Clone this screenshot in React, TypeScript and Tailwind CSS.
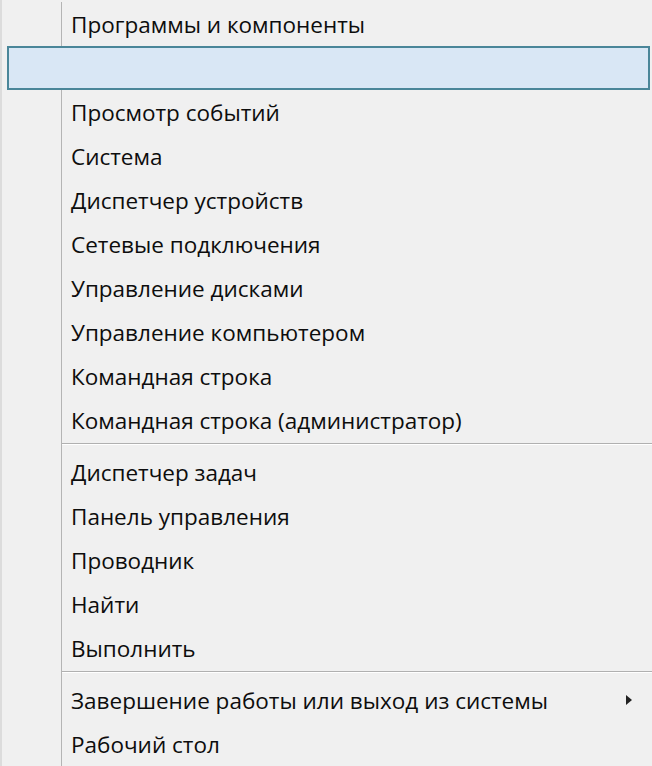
const groups: string[][] = [
  [
    'Программы и компоненты',
    '',
    'Просмотр событий',
    'Система',
    'Диспетчер устройств',
    'Сетевые подключения',
    'Управление дисками',
    'Управление компьютером',
    'Командная строка',
    'Командная строка (администратор)',
  ],
  ['Диспетчер задач', 'Панель управления', 'Проводник', 'Найти', 'Выполнить'],
  ['Завершение работы или выход из системы', 'Рабочий стол'],
];

function Row({ label, active, submenu }: { label: string; active?: boolean; submenu?: boolean }) {
  if (active) {
    return (
      <div className="h-11 pl-[5px] pr-[2px]">
        <div className="h-full border-2 border-[#4a8699] bg-[#d9e7f5]" />
      </div>
    );
  }
  return (
    <div className="h-11 flex items-center">
      <div className="w-[60px] h-full shrink-0 border-r border-[#b4b4b4]" />
      <span className="pl-[9px] pt-[2px] flex-1 text-[22.5px] text-[#0d0d0d]">{label}</span>
      {submenu && (
        <svg width="8" height="12" viewBox="0 0 8 12" className="mr-[19px]">
          <path d="M1 1 L7 6 L1 11 Z" fill="#222" />
        </svg>
      )}
    </div>
  );
}

function Separator() {
  return (
    <div className="h-2 flex">
      <div className="w-[60px] shrink-0 border-r border-[#b4b4b4]" />
      <div className="flex-1 pt-[1px]">
        <div className="h-[2px] border-t border-[#b0b0b0] bg-white" />
      </div>
    </div>
  );
}

export default function App() {
  return (
    <div
      className="w-[652px] h-[766px] bg-[#f0f0f0] border-l-2 border-[#dcdcdc] overflow-hidden pt-[2px]"
      style={{ fontFamily: '"Open Sans", "Noto Sans", sans-serif' }}
    >
      {groups.map((items, gi) => (
        <div key={gi}>
          {gi > 0 && <Separator />}
          {items.map((label, i) => (
            <Row
              key={i}
              label={label}
              active={gi === 0 && i === 1}
              submenu={gi === 2 && i === 0}
            />
          ))}
        </div>
      ))}
    </div>
  );
}
